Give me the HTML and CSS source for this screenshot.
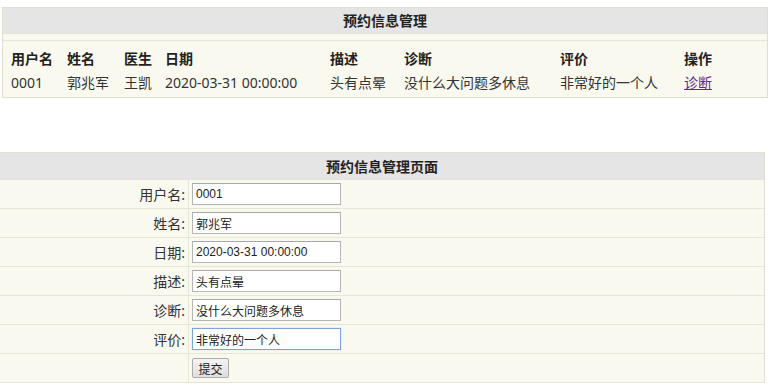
FILE: index.html
```html
<!DOCTYPE html>
<html lang="zh-CN">
<head>
<meta charset="utf-8">
<title>预约信息管理</title>
<link rel="stylesheet" href="styles.css">
</head>
<body>
<table class="list">
  <colgroup>
    <col class="c1"><col class="c2"><col class="c3"><col class="c4"><col class="c5"><col class="c6"><col class="c7"><col class="c8">
  </colgroup>
  <tr class="title-row"><th colspan="8">预约信息管理</th></tr>
  <tr class="spacer-row"><td colspan="8"></td></tr>
  <tr class="head-row">
    <th>用户名</th><th>姓名</th><th>医生</th><th>日期</th><th>描述</th><th>诊断</th><th>评价</th><th>操作</th>
  </tr>
  <tr class="data-row">
    <td>0001</td><td>郭兆军</td><td>王凯</td><td>2020-03-31 00:00:00</td><td>头有点晕</td><td>没什么大问题多休息</td><td>非常好的一个人</td><td><a class="op-link" href="#">诊断</a></td>
  </tr>
</table>

<table class="form">
  <colgroup><col class="fc1"><col class="fc2"></colgroup>
  <tr class="title-row"><th colspan="2">预约信息管理页面</th></tr>
  <tr><td class="label">用户名:</td><td class="field"><input class="inp" type="text" value="0001"></td></tr>
  <tr><td class="label">姓名:</td><td class="field"><input class="inp" type="text" value="郭兆军"></td></tr>
  <tr><td class="label">日期:</td><td class="field"><input class="inp" type="text" value="2020-03-31 00:00:00"></td></tr>
  <tr><td class="label">描述:</td><td class="field"><input class="inp" type="text" value="头有点晕"></td></tr>
  <tr><td class="label">诊断:</td><td class="field"><input class="inp" type="text" value="没什么大问题多休息"></td></tr>
  <tr><td class="label">评价:</td><td class="field"><input class="inp focused" type="text" value="非常好的一个人"></td></tr>
  <tr class="last"><td class="label"></td><td class="field"><button class="btn" type="button">提交</button></td></tr>
</table>
</body>
</html>
```
FILE: styles.css
```css
* { box-sizing: border-box; }
html, body { background: #ffffff; }
body {
  margin: 0;
  font-family: "Noto Sans", "Noto Sans CJK SC", sans-serif;
  font-size: 14px;
  color: #333333;
}

/* ---- top list table ---- */
.list {
  margin: 7px 1px 0 2px;
  width: 766px;
  table-layout: fixed;
  border-collapse: separate;
  border-spacing: 0;
  border: 1px solid #dedfd0;
  background: #f9f9ef;
}
.c1 { width: 56px; }
.c2 { width: 57px; }
.c3 { width: 41px; }
.c4 { width: 165px; }
.c5 { width: 74px; }
.c6 { width: 156px; }
.c7 { width: 124px; }
.c8 { width: 91px; }

.list th, .list td {
  padding: 0 0 0 8px;
  text-align: left;
  white-space: nowrap;
  line-height: 20px;
}
.list .title-row th {
  height: 26px;
  background: #e5e5e5;
  text-align: center;
  padding: 0;
  font-weight: bold;
  color: #222;
  border-bottom: 1px solid #e4e4d2;
}
.list .spacer-row td {
  height: 7px;
  padding: 0;
  border-bottom: 1px solid #e6e6d4;
}
.list .head-row th {
  height: 30px;
  padding-top: 6px;
  font-weight: bold;
  color: #222;
}
.list .data-row td {
  height: 26px;
  padding-bottom: 2px;
}
.op-link {
  color: #5a2d91;
  text-decoration: underline;
}

/* ---- form table ---- */
.form {
  margin: 54px 0 0 0;
  width: 765px;
  table-layout: fixed;
  border-collapse: separate;
  border-spacing: 0;
  border-top: 1px solid #e2e2d4;
  border-right: 1px solid #dedfd0;
  background: #f9f9ef;
}
.fc1 { width: 189px; }
.fc2 { width: auto; }
.form .title-row th {
  height: 27px;
  background: #e5e5e5;
  text-align: center;
  font-weight: bold;
  color: #222;
  padding: 0;
  border-bottom: 1px solid #e4e4d2;
}
.form td {
  height: 29px;
  border-bottom: 1px solid #e6e6d4;
  padding: 0;
}
.form .last td { height: 29px; }
.form .label {
  text-align: right;
  padding-right: 3px;
  border-right: 1px solid #e6e6d4;
  color: #333;
}
.form .field {
  padding-left: 3px;
}
.inp {
  display: block;
  width: 149px;
  height: 22px;
  margin: 0;
  padding: 1px 3px;
  border: 1px solid #b5b5b5;
  border-top-color: #a8a8a8;
  background: #ffffff;
  font-family: "Liberation Sans", "Noto Sans CJK SC", sans-serif;
  font-size: 12px;
  color: #222;
  outline: none;
}
.inp.focused {
  border-color: #7fa4d8;
  box-shadow: 0 0 1px #a9c4ea;
}
.btn {
  display: block;
  width: 37px;
  height: 20px;
  margin: 0;
  padding: 0;
  border: 1px solid #acacac;
  border-radius: 2px;
  background: linear-gradient(#f4f4f4, #dedede);
  font-family: "Noto Sans CJK SC", sans-serif;
  font-size: 12px;
  color: #222;
}
```
